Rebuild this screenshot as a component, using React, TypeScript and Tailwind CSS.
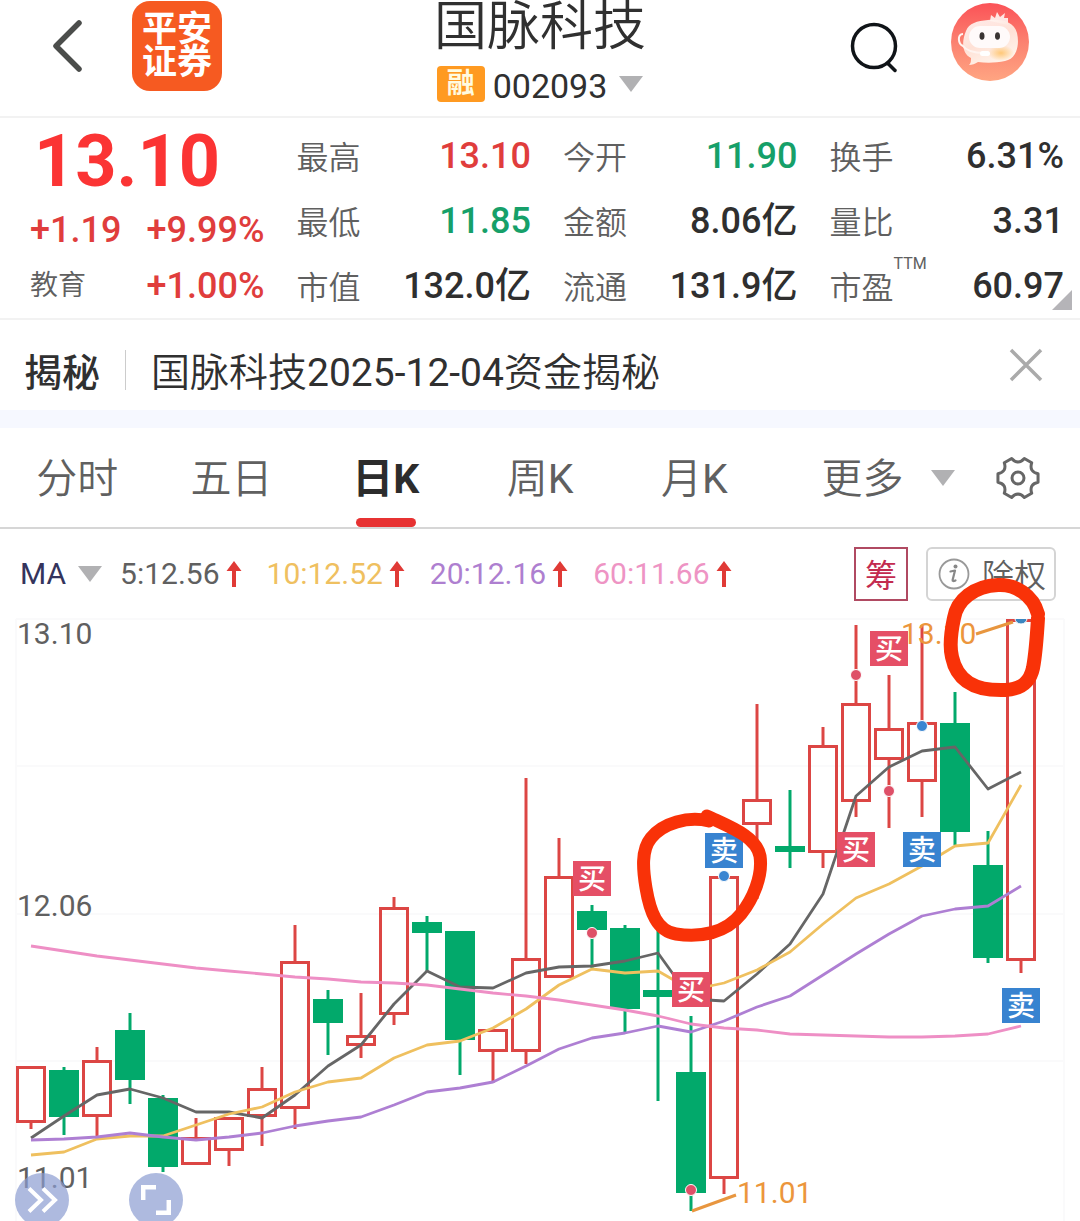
import React from "react";

type Candle = { up: boolean; high: number; top: number; bottom: number; low: number };

const FIRST_X = 31;
const STEP = 33;
const xAt = (i: number) => FIRST_X + STEP * i;

const c = (up: boolean, high: number, top: number, bottom: number, low: number): Candle => ({ up, high, top, bottom, low });

const candles: Candle[] = [
  c(true, 1066, 1066, 1123, 1129),
  c(false, 1067, 1070, 1117, 1135),
  c(true, 1047, 1060, 1117, 1138),
  c(false, 1013, 1030, 1080, 1104),
  c(false, 1095, 1098, 1167, 1172),
  c(true, 1118, 1137, 1165, 1165),
  c(true, 1117, 1117, 1151, 1166),
  c(true, 1067, 1088, 1117, 1146),
  c(true, 925, 961, 1109, 1129),
  c(false, 990, 999, 1023, 1055),
  c(true, 993, 1035, 1046, 1058),
  c(true, 897, 907, 1015, 1025),
  c(false, 916, 922, 933, 971),
  c(false, 931, 931, 1040, 1075),
  c(true, 1029, 1029, 1052, 1083),
  c(true, 778, 958, 1052, 1064),
  c(true, 838, 876, 978, 978),
  c(false, 905, 911, 930, 968),
  c(false, 925, 928, 1009, 1033),
  c(false, 930, 990, 997, 1101),
  c(false, 1016, 1072, 1193, 1211),
  c(true, 876, 876, 1179, 1194),
  c(true, 704, 799, 825, 899),
  c(false, 790, 846, 852, 868),
  c(true, 727, 745, 853, 868),
  c(true, 625, 703, 802, 817),
  c(true, 675, 728, 760, 828),
  c(true, 625, 722, 782, 817),
  c(false, 692, 723, 832, 845),
  c(false, 831, 865, 958, 963),
  c(true, 619, 619, 961, 973),
];

const averages = [
  {
    color: "#666666",
    ys: [1138, 1116, 1095, 1089, 1098, 1112, 1112, 1118, 1095, 1066, 1045, 1004, 971, 987, 988, 973, 967, 966, 961, 953, 999, 1001, 974, 944, 894, 796, 767, 751, 747, 789, 772],
  },
  {
    color: "#efc05f",
    ys: [1155, 1152, 1139, 1136, 1136, 1125, 1114, 1107, 1092, 1082, 1078, 1058, 1045, 1041, 1028, 1009, 985, 969, 973, 971, 990, 983, 970, 952, 924, 898, 884, 866, 846, 843, 785],
  },
  {
    color: "#ae7fd3",
    ys: [1140, 1139, 1137, 1133, 1137, 1140, 1137, 1133, 1126, 1121, 1117, 1105, 1092, 1088, 1082, 1066, 1049, 1038, 1033, 1026, 1032, 1021, 1007, 996, 975, 954, 934, 916, 909, 906, 886],
  },
  {
    color: "#ee8fc5",
    ys: [946, 951, 956, 960, 964, 968, 971, 974, 977, 979, 982, 983, 985, 989, 993, 996, 1000, 1005, 1010, 1016, 1024, 1028, 1030, 1034, 1035, 1036, 1037, 1037, 1036, 1034, 1026],
  },
];

const trades = [
  { x: 592, y: 878, buy: true },
  { x: 691, y: 989, buy: true },
  { x: 724, y: 850, buy: false },
  { x: 856, y: 849, buy: true },
  { x: 889, y: 648, buy: true },
  { x: 922, y: 849, buy: false },
  { x: 1021, y: 1005, buy: false },
];

const dots = [
  { x: 592, y: 933, buy: true },
  { x: 691, y: 1190, buy: true },
  { x: 724, y: 876, buy: false },
  { x: 856, y: 675, buy: true },
  { x: 889, y: 791, buy: true },
  { x: 922, y: 726, buy: false },
];

const RED = "#dc4644";
const GREEN = "#02a96b";

function CandleShape({ i, d }: { i: number; d: Candle }) {
  const x = xAt(i);
  const color = d.up ? RED : GREEN;
  return (
    <g stroke={color} strokeWidth={3}>
      {d.high < d.top && <line x1={x} x2={x} y1={d.high} y2={d.top} />}
      {d.low > d.bottom && <line x1={x} x2={x} y1={d.bottom} y2={d.low} />}
      {d.up ? (
        <rect x={x - 13.5} y={d.top + 1.5} width={27} height={d.bottom - d.top - 3} fill="none" />
      ) : (
        <rect x={x - 15} y={d.top} width={30} height={d.bottom - d.top} fill={GREEN} stroke="none" />
      )}
    </g>
  );
}

function Chart() {
  return (
    <svg viewBox="0 618 1080 603" className="pointer-events-none relative block w-full overflow-visible" role="img" aria-label="日K线图">
      <g stroke="#fafafb" strokeWidth={2} fill="none">
        <path d="M16 619H1064M16 766H1064M16 914H1064M16 1061H1064M16 619V1221M1064 619V1221" />
      </g>
      {candles.map((d, i) => (
        <CandleShape key={i} i={i} d={d} />
      ))}
      {averages.map((a) => (
        <polyline key={a.color} points={a.ys.map((y, i) => `${xAt(i)},${y}`).join(" ")} fill="none" stroke={a.color} strokeWidth={2.8} strokeLinejoin="round" />
      ))}
      <g fontSize={30} fill="#606060">
        <text x={17} y={644}>13.10</text>
        <text x={17} y={916}>12.06</text>
        <text x={17} y={1188}>11.01</text>
      </g>
      <g fontSize={30} fill="#ec963c">
        <text x={901} y={644}>13.10</text>
        <text x={737} y={1203}>11.01</text>
      </g>
      <path d="M976 634L1013 622M692 1211L736 1195" stroke="#e8963f" strokeWidth={3} />
      {dots.map((d) => (
        <circle key={`${d.x}-${d.y}`} cx={d.x} cy={d.y} r={5.5} fill={d.buy ? "#de5068" : "#3b86d1"} stroke="#fff" strokeWidth={1} />
      ))}
      <path d="M1015 618.500H1027A6 5.500 0 0 1 1015 618.500Z" fill="#3b86c0" stroke="#fff" />
      {trades.map((t) => (
        <g key={`${t.x}-${t.y}`}>
          <rect x={t.x - 19} y={t.y - 17} width={38} height={35} fill={t.buy ? "#e54f66" : "#3883d0"} />
          <text x={t.x} y={t.y + 11} fontSize={28} fontWeight={500} textAnchor="middle" fill="#fff">
            {t.buy ? "买" : "卖"}
          </text>
        </g>
      ))}
      <g fill="none" stroke="#f93208" strokeWidth={13} strokeLinecap="round" strokeLinejoin="round">
        <path d="M709 821C688 816 663 823 651 838C641 850 643 870 646 888C650 912 657 931 676 934C700 938 726 933 741 914C753 899 763 876 760 856C756 836 730 827 707 816" />
        <path strokeWidth={14} d="M1038 614C1033 595 1015 584 998 585C974 586 957 600 954 618C951 632 949 645 952 657C957 681 975 691 1005 690C1022 689 1030 682 1033 668C1036 652 1037 635 1038 618" />
      </g>
    </svg>
  );
}

function Caret() {
  return (
    <svg viewBox="0 0 24 16" className="h-4 w-6 shrink-0" aria-hidden="true">
      <path d="M0 0H24L12 16Z" fill="#b1b1b3" />
    </svg>
  );
}

const polar = (deg: number, r: number) => {
  const a = (deg * Math.PI) / 180;
  return `${(22 + r * Math.cos(a)).toFixed(2)} ${(22 + r * Math.sin(a)).toFixed(2)}`;
};
const gearPath =
  [0, 60, 120, 180, 240, 300]
    .map((a, i) => `${i ? "L" : "M"}${polar(a - 12, 20.5)}L${polar(a + 12, 20.5)}Q${polar(a + 18, 16.5)} ${polar(a + 30, 16)}Q${polar(a + 42, 16.5)} ${polar(a + 48, 20.5)}`)
    .join("") + "Z";

function Gear() {
  return (
    <svg viewBox="0 0 44 44" className="size-11" fill="none" stroke="#666" strokeWidth={3} strokeLinejoin="round" aria-hidden="true">
      <path d={gearPath} />
      <circle cx={22} cy={22} r={6} />
    </svg>
  );
}

function Assistant() {
  return (
    <svg viewBox="0 0 78 78" className="size-[78px]" aria-hidden="true">
      <defs>
        <linearGradient id="sky" x1="0" y1="0" x2="0" y2="1">
          <stop offset="0" stopColor="#fb5257" />
          <stop offset="0.5" stopColor="#fb8170" />
          <stop offset="1" stopColor="#ffa582" />
        </linearGradient>
        <linearGradient id="head" x1="0" y1="0" x2="0.5" y2="1">
          <stop offset="0" stopColor="#fff" stopOpacity="0.85" />
          <stop offset="0.55" stopColor="#ffe1d6" />
          <stop offset="1" stopColor="#fff3ea" />
        </linearGradient>
        <radialGradient id="glow">
          <stop offset="0" stopColor="#ffc877" />
          <stop offset="1" stopColor="#ffc877" stopOpacity="0" />
        </radialGradient>
      </defs>
      <circle cx={39} cy={39} r={39} fill="url(#sky)" />
      <path d="M39 18L40 12L44 15L46 9L49 14L54 10L53 15L57 15L57 22Z" fill="#ffe6e3" />
      <path d="M15 28C18 20 26 18 37 17C52 16 63 19 66 30C69 43 65 56 54 58C45 60 35 60 27 59C24 61 21 62 18 62C20 60 20 58 20 55C10 50 11 37 15 28Z" fill="url(#head)" />
      <ellipse cx={50} cy={50} rx={13} ry={8} fill="url(#glow)" />
      <rect x={18} y={23} width={41} height={22} rx={11} fill="#fffafa" />
      <ellipse cx={31} cy={33} rx={2.5} ry={3.8} fill="#3a3433" />
      <ellipse cx={46.500} cy={33} rx={2.5} ry={3.8} fill="#3a3433" />
      <path d="M12 31C6 31 7 41 12 43M11 42C16 49 25 50 33 50" fill="none" stroke="#fff4f0" strokeWidth={2} />
      <rect x={29} y={48} width={10} height={5} rx={2.500} fill="#fff" />
    </svg>
  );
}

function Header() {
  return (
    <header className="grid h-[118px] grid-cols-[1fr_auto_1fr] border-b-2 border-[#f2f2f2]">
      <div className="flex items-start gap-12 pl-[52px]">
        <button aria-label="返回" className="mt-[18px]">
          <svg viewBox="0 0 32 56" className="h-14 w-8" fill="none" stroke="#4b4d4b" strokeWidth={5.5} strokeLinecap="round" strokeLinejoin="round">
            <path d="M27 5L4 28L27 51" />
          </svg>
        </button>
        <div className="mt-px size-[90px] rounded-[18px] bg-[#f65a21] px-[9px] pt-3 text-center text-[35px] leading-[33px] font-bold text-white">
          平安证券
        </div>
      </div>
      <div className="flex flex-col items-center">
        <h1 className="h-[58px] text-[53px] leading-[55px] font-[350] text-[#303030]">国脉科技</h1>
        <button className="flex items-center gap-2 text-[34px] leading-12 text-[#303030]">
          <span className="flex h-9 w-12 items-center justify-center rounded-sm bg-[#ff9a21] text-[28px] leading-9 font-bold text-[#fffbe0]">融</span>
          <span className="pt-1 pr-1">002093</span>
          <Caret />
        </button>
      </div>
      <div className="flex items-start justify-end gap-[49px] pr-[51px]">
        <button aria-label="搜索" className="mt-5">
          <svg viewBox="0 0 56 56" className="size-14" fill="none" stroke="#101418" strokeWidth={3.5} strokeLinecap="round">
            <circle cx={28} cy={26} r={21.5} />
            <path d="M42.500 44L49 50.500" />
          </svg>
        </button>
        <button aria-label="智能助手" className="mt-[3px]">
          <Assistant />
        </button>
      </div>
    </header>
  );
}

const UP = "text-[#e03d3c]";
const DOWN = "text-[#16a069]";
const PLAIN = "text-[#2f2f2f]";

const stats = [
  { label: "最高", value: "13.10", tone: UP },
  { label: "今开", value: "11.90", tone: DOWN },
  { label: "换手", value: "6.31%", tone: PLAIN },
  { label: "最低", value: "11.85", tone: DOWN },
  { label: "金额", value: "8.06亿", tone: PLAIN },
  { label: "量比", value: "3.31", tone: PLAIN },
  { label: "市值", value: "132.0亿", tone: PLAIN },
  { label: "流通", value: "131.9亿", tone: PLAIN },
  { label: "市盈", note: "TTM", value: "60.97", tone: PLAIN },
];

function Quote() {
  return (
    <section className="relative grid grid-cols-4 gap-x-8 border-b-2 border-[#f2f2f2] pr-4 pl-[30px]">
      <div className="text-[36px] font-medium text-[#e03d3c]">
        <div className="pt-1 pl-1 text-[72px] leading-[80px] font-bold text-[#fb3434]">13.10</div>
        <div className="flex justify-between leading-[56px]">
          <span>+1.19</span>
          <span>+9.99%</span>
        </div>
        <div className="flex items-center justify-between leading-[56px]">
          <span className="text-[28px] font-[350] text-[#606060]">教育</span>
          <span>+1.00%</span>
        </div>
      </div>
      <dl className="col-span-3 grid grid-cols-3 gap-x-8 pt-[5px]">
        {stats.map((s) => (
          <div key={s.label} className="flex h-[65px] items-center justify-between leading-[60px]">
            <dt className="relative pt-1 text-[32px] font-[350] text-[#606060]">
              {s.label}
              {s.note && <sup className="absolute top-0 left-full text-base leading-5 font-normal">{s.note}</sup>}
            </dt>
            <dd className={`text-[36px] font-medium ${s.tone}`}>{s.value}</dd>
          </div>
        ))}
      </dl>
      <svg viewBox="0 0 20 20" className="absolute right-2 bottom-2 size-5" aria-hidden="true">
        <path d="M20 0V20H0Z" fill="#b5b4b8" />
      </svg>
    </section>
  );
}

function Notice() {
  return (
    <section className="flex h-[90px] items-center pt-4 pr-9 pl-6 text-[38px] text-[#303030]">
      <strong className="font-medium">揭秘</strong>
      <span className="mx-[25px] mb-1.5 h-10 w-px bg-[#ccc]" />
      <a href="#notice" className="flex-1 text-[39px] font-[350]">
        国脉科技<span className="font-normal">2025-12-04</span>资金揭秘
      </a>
      <button aria-label="关闭" className="pb-4">
        <svg viewBox="0 0 36 36" className="size-9" fill="none" stroke="#aaa" strokeWidth={3.5}>
          <path d="M3 3L33 33M33 3L3 33" />
        </svg>
      </button>
    </section>
  );
}

const tabs = [
  { name: "分时" },
  { name: "五日" },
  { name: "日", suffix: "K", active: true },
  { name: "周", suffix: "K" },
  { name: "月", suffix: "K" },
];

function Tabs() {
  return (
    <nav className="grid h-[101px] grid-cols-7 border-b-2 border-[#d6d6d6] text-[41px] text-[#606060]">
      {tabs.map((t) =>
        t.active ? (
          <button key={t.name} aria-current="page" className="relative pt-1 font-bold text-[#2c2c2c]">
            {t.name}
            {t.suffix}
            <span className="absolute bottom-0 left-1/2 h-[9px] w-[60px] -translate-x-1/2 rounded-full bg-[#e73232]" />
          </button>
        ) : (
          <button key={t.name} className="pt-1 font-[350]">
            {t.name}
            <span className="font-normal">{t.suffix}</span>
          </button>
        ),
      )}
      <div className="col-span-2 flex items-center justify-between pr-10 pl-[50px]">
        <button className="flex items-center gap-7 font-[350]">
          <span className="pt-1">更多</span>
          <Caret />
        </button>
        <button aria-label="设置">
          <Gear />
        </button>
      </div>
    </nav>
  );
}

const legend = [
  { text: "5:12.56", tone: "text-[#606060]" },
  { text: "10:12.52", tone: "text-[#efc060]" },
  { text: "20:12.16", tone: "text-[#ae7fd0]" },
  { text: "60:11.66", tone: "text-[#ee94c4]" },
];

function Indicators() {
  return (
    <div className="flex h-[89px] items-center pr-6 pl-5 text-[30px]">
      <button className="flex items-center gap-3 text-[#34345c]">
        MA
        <Caret />
      </button>
      <ul className="ml-[18px] flex flex-1 gap-[25px]">
        {legend.map((l) => (
          <li key={l.text} className={`flex items-center gap-1.5 ${l.tone}`}>
            {l.text}
            <svg viewBox="0 0 16 26" className="h-[26px] w-4" aria-label="上升">
              <path d="M8 0L15.500 10H10V26H6V10H.5Z" fill="#e03a36" />
            </svg>
          </li>
        ))}
      </ul>
      <button className="flex size-[54px] items-center justify-center border-2 border-[#b04a62] pt-1 text-[32px] leading-none text-[#c32b50]">筹</button>
      <button className="ml-[18px] flex h-[54px] items-center gap-3 rounded-md border-2 border-[#d4d4d4] pr-2 pl-2.5 text-[32px] leading-none font-[350] text-[#606060]">
        <svg viewBox="0 0 32 32" className="size-8" aria-hidden="true">
          <circle cx={16} cy={16} r={14.5} fill="none" stroke="#999" strokeWidth={1.8} />
          <circle cx={17.500} cy={8.500} r={2} fill="#888" />
          <path d="M12.500 13.500L17 12.500L14.600 22Q14.400 23.800 17.500 22.500" fill="none" stroke="#888" strokeWidth={2.2} strokeLinecap="round" strokeLinejoin="round" />
        </svg>
        <span className="pt-1">除权</span>
      </button>
    </div>
  );
}

export default function App() {
  return (
    <main lang="zh-CN" className="w-full overflow-hidden bg-white font-['Roboto','Noto_Sans_CJK_SC',sans-serif]">
      <Header />
      <Quote />
      <Notice />
      <div className="h-[18px] bg-[#f6f8ff]" />
      <Tabs />
      <section className="relative overflow-hidden">
        <Indicators />
        <Chart />
        <div className="absolute -bottom-[6px] left-[15px] flex gap-[60px]">
          <button aria-label="展开" className="flex size-[54px] items-center justify-center rounded-full bg-[#8b9cd1b3]">
            <svg viewBox="0 0 32 26" className="h-[26px] w-8" fill="none" stroke="#fff" strokeWidth={4}>
              <path d="M3 1.500L15 13L3 24.500M17 1.500L29 13L17 24.500" />
            </svg>
          </button>
          <button aria-label="全屏" className="flex size-[54px] items-center justify-center rounded-full bg-[#8b9cd1b3]">
            <svg viewBox="0 0 30 30" className="size-[30px]" fill="none" stroke="#fff" strokeWidth={4.500}>
              <path d="M2.200 15V2.200H15M27.800 15V27.800H15" />
            </svg>
          </button>
        </div>
      </section>
    </main>
  );
}
